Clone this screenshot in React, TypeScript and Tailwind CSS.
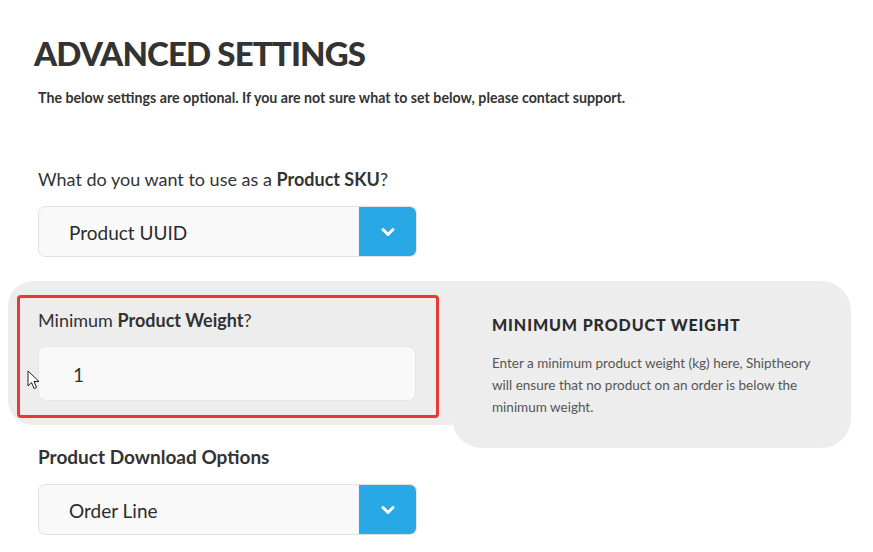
import { ChevronDown } from "lucide-react";

function SelectBox({ value }: { value: string }) {
  return (
    <div className="flex h-[51px] w-[379px] overflow-hidden rounded-[7px] border border-[#e2e2e2] bg-[#f9f9f9]">
      <div className="flex flex-1 items-center pl-[30px] pt-[3px] text-[19px] text-[#2b2b2b]">{value}</div>
      <div className="flex w-[57px] items-center justify-center bg-[#29a8e6]">
        <ChevronDown size={20} strokeWidth={3.5} className="text-white" />
      </div>
    </div>
  );
}

export default function App() {
  return (
    <div className="h-[552px] w-[873px] overflow-hidden bg-white font-['Lato',sans-serif] text-[#333]">
      {/* HEADER */}
      <h1 className="ml-[34px] mt-[36px] text-[33px] font-black leading-[34px] tracking-[-0.85px] text-[#333]">
        ADVANCED SETTINGS
      </h1>
      <p className="ml-[38px] mt-[18px] text-[14.2px] font-bold leading-[20px] text-[#333]">
        The below settings are optional. If you are not sure what to set below, please contact support.
      </p>

      {/* SKU */}
      <div className="ml-[38px] mt-[59px]">
        <p className="text-[18px] leading-[24px]">
          What do you want to use as a <span className="font-bold">Product SKU</span>?
        </p>
        <div className="mt-[15px]">
          <SelectBox value="Product UUID" />
        </div>
      </div>

      {/* WEIGHT */}
      <div className="ml-[8px] mt-[24px] flex items-start">
        <div className="w-[444px] rounded-l-[25px] bg-[#ededed] pb-[7px] pl-[9px] pr-[13px] pt-[14px]">
          <div className="relative rounded-[4px] border-[3px] border-[#e8393a] pb-[14px] pl-[18px] pt-[10px]">
            <p className="text-[18px] leading-[24px]">
              Minimum <span className="font-bold">Product Weight</span>?
            </p>
            <div className="mt-[14px] flex h-[55px] w-[378px] items-center rounded-[8px] border border-[#e6e6e6] bg-[#f9f9f9] pl-[34px] pt-[3px] text-[19px]">
              1
            </div>
            <svg className="absolute left-[7px] top-[72px]" width="13" height="20" viewBox="0 0 13 20">
              <path d="M1 1 L1 16 L4.5 12.5 L7 18.5 L9.5 17.5 L7 11.5 L12 11.5 Z" fill="white" stroke="#222" strokeWidth="1" strokeLinejoin="round" />
            </svg>
          </div>
        </div>
        <div className="h-[167px] w-[399px] rounded-r-[30px] rounded-bl-[30px] bg-[#ededed] pl-[40px] pr-[40px] pt-[34px]">
          <h3 className="text-[16px] font-black leading-[20px] tracking-[0.9px] text-[#2b2b2b]">MINIMUM PRODUCT WEIGHT</h3>
          <p className="mt-[17px] text-[13.5px] leading-[22px] text-[#555]">
            Enter a minimum product weight (kg) here, Shiptheory will ensure that no product on an order is below the
            minimum weight.
          </p>
        </div>
      </div>

      {/* DOWNLOAD OPTIONS */}
      <div className="ml-[38px] mt-[-3px]">
        <p className="text-[19px] font-bold leading-[24px]">Product Download Options</p>
        <div className="mt-[15px]">
          <SelectBox value="Order Line" />
        </div>
      </div>
    </div>
  );
}
